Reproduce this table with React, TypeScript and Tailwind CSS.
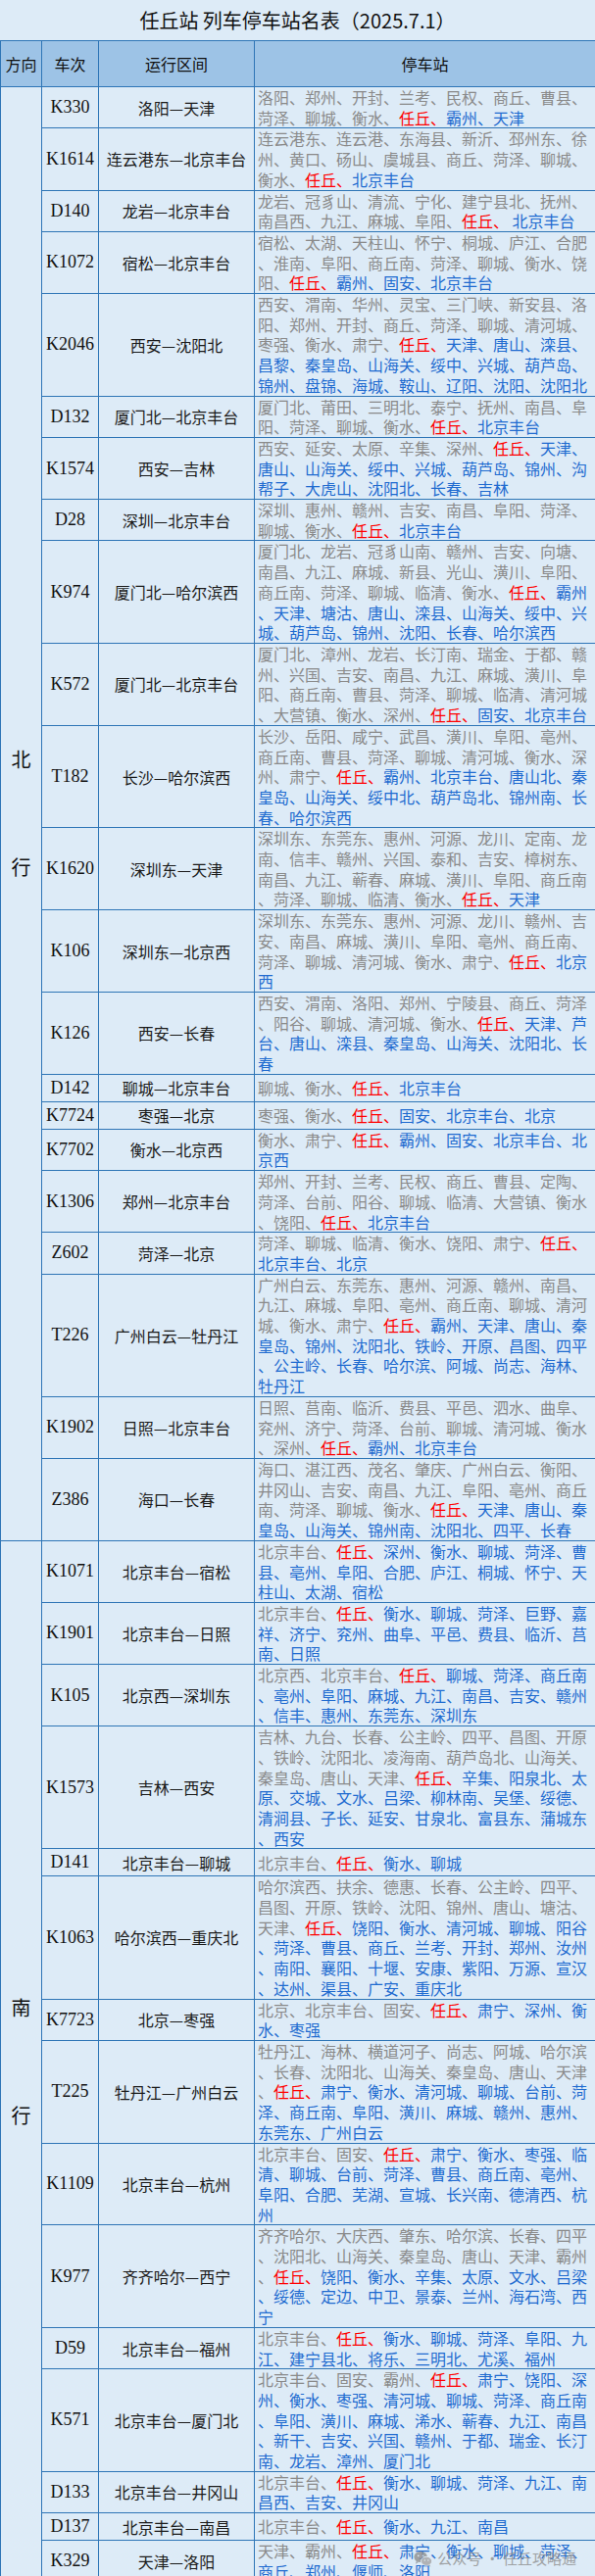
import React from "react";

type Row = { no: string; route: string; lines: string[] };

const north: Row[] = [
  { no: "K330", route: "洛阳—天津", lines: ["洛阳、郑州、开封、兰考、民权、商丘、曹县、", "菏泽、聊城、衡水、任丘、霸州、天津"] },
  { no: "K1614", route: "连云港东—北京丰台", lines: ["连云港东、连云港、东海县、新沂、邳州东、徐", "州、黄口、砀山、虞城县、商丘、菏泽、聊城、", "衡水、任丘、北京丰台"] },
  { no: "D140", route: "龙岩—北京丰台", lines: ["龙岩、冠豸山、清流、宁化、建宁县北、抚州、", "南昌西、九江、麻城、阜阳、任丘、 北京丰台"] },
  { no: "K1072", route: "宿松—北京丰台", lines: ["宿松、太湖、天柱山、怀宁、桐城、庐江、合肥", "、淮南、阜阳、商丘南、菏泽、聊城、衡水、饶", "阳、任丘、霸州、固安、北京丰台"] },
  { no: "K2046", route: "西安—沈阳北", lines: ["西安、渭南、华州、灵宝、三门峡、新安县、洛", "阳、郑州、开封、商丘、菏泽、聊城、清河城、", "枣强、衡水、肃宁、任丘、天津、唐山、滦县、", "昌黎、秦皇岛、山海关、绥中、兴城、葫芦岛、", "锦州、盘锦、海城、鞍山、辽阳、沈阳、沈阳北"] },
  { no: "D132", route: "厦门北—北京丰台", lines: ["厦门北、莆田、三明北、泰宁、抚州、南昌、阜", "阳、菏泽、聊城、衡水、任丘、北京丰台"] },
  { no: "K1574", route: "西安—吉林", lines: ["西安、延安、太原、辛集、深州、任丘、天津、", "唐山、山海关、绥中、兴城、葫芦岛、锦州、沟", "帮子、大虎山、沈阳北、长春、吉林"] },
  { no: "D28", route: "深圳—北京丰台", lines: ["深圳、惠州、赣州、吉安、南昌、阜阳、菏泽、", "聊城、衡水、任丘、北京丰台"] },
  { no: "K974", route: "厦门北—哈尔滨西", lines: ["厦门北、龙岩、冠豸山南、赣州、吉安、向塘、", "南昌、九江、麻城、新县、光山、潢川、阜阳、", "商丘南、菏泽、聊城、临清、衡水、任丘、霸州", "、天津、塘沽、唐山、滦县、山海关、绥中、兴", "城、葫芦岛、锦州、沈阳、长春、哈尔滨西"] },
  { no: "K572", route: "厦门北—北京丰台", lines: ["厦门北、漳州、龙岩、长汀南、瑞金、于都、赣", "州、兴国、吉安、南昌、九江、麻城、潢川、阜", "阳、商丘南、曹县、菏泽、聊城、临清、清河城", "、大营镇、衡水、深州、任丘、固安、北京丰台"] },
  { no: "T182", route: "长沙—哈尔滨西", lines: ["长沙、岳阳、咸宁、武昌、潢川、阜阳、亳州、", "商丘南、曹县、菏泽、聊城、清河城、衡水、深", "州、肃宁、任丘、霸州、北京丰台、唐山北、秦", "皇岛、山海关、绥中北、葫芦岛北、锦州南、长", "春、哈尔滨西"] },
  { no: "K1620", route: "深圳东—天津", lines: ["深圳东、东莞东、惠州、河源、龙川、定南、龙", "南、信丰、赣州、兴国、泰和、吉安、樟树东、", "南昌、九江、蕲春、麻城、潢川、阜阳、商丘南", "、菏泽、聊城、临清、衡水、任丘、天津"] },
  { no: "K106", route: "深圳东—北京西", lines: ["深圳东、东莞东、惠州、河源、龙川、赣州、吉", "安、南昌、麻城、潢川、阜阳、亳州、商丘南、", "菏泽、聊城、清河城、衡水、肃宁、任丘、北京", "西"] },
  { no: "K126", route: "西安—长春", lines: ["西安、渭南、洛阳、郑州、宁陵县、商丘、菏泽", "、阳谷、聊城、清河城、衡水、任丘、天津、芦", "台、唐山、滦县、秦皇岛、山海关、沈阳北、长", "春"] },
  { no: "D142", route: "聊城—北京丰台", lines: ["聊城、衡水、任丘、北京丰台"] },
  { no: "K7724", route: "枣强—北京", lines: ["枣强、衡水、任丘、固安、北京丰台、北京"] },
  { no: "K7702", route: "衡水—北京西", lines: ["衡水、肃宁、任丘、霸州、固安、北京丰台、北", "京西"] },
  { no: "K1306", route: "郑州—北京丰台", lines: ["郑州、开封、兰考、民权、商丘、曹县、定陶、", "菏泽、台前、阳谷、聊城、临清、大营镇、衡水", "、饶阳、任丘、北京丰台"] },
  { no: "Z602", route: "菏泽—北京", lines: ["菏泽、聊城、临清、衡水、饶阳、肃宁、任丘、", "北京丰台、北京"] },
  { no: "T226", route: "广州白云—牡丹江", lines: ["广州白云、东莞东、惠州、河源、赣州、南昌、", "九江、麻城、阜阳、亳州、商丘南、聊城、清河", "城、衡水、肃宁、任丘、霸州、天津、唐山、秦", "皇岛、锦州、沈阳北、铁岭、开原、昌图、四平", "、公主岭、长春、哈尔滨、阿城、尚志、海林、", "牡丹江"] },
  { no: "K1902", route: "日照—北京丰台", lines: ["日照、莒南、临沂、费县、平邑、泗水、曲阜、", "兖州、济宁、菏泽、台前、聊城、清河城、衡水", "、深州、任丘、霸州、北京丰台"] },
  { no: "Z386", route: "海口—长春", lines: ["海口、湛江西、茂名、肇庆、广州白云、衡阳、", "井冈山、吉安、南昌、九江、阜阳、亳州、商丘", "南、菏泽、聊城、衡水、任丘、天津、唐山、秦", "皇岛、山海关、锦州南、沈阳北、四平、长春"] },
];

const south: Row[] = [
  { no: "K1071", route: "北京丰台—宿松", lines: ["北京丰台、任丘、深州、衡水、聊城、菏泽、曹", "县、亳州、阜阳、合肥、庐江、桐城、怀宁、天", "柱山、太湖、宿松"] },
  { no: "K1901", route: "北京丰台—日照", lines: ["北京丰台、任丘、衡水、聊城、菏泽、巨野、嘉", "祥、济宁、兖州、曲阜、平邑、费县、临沂、莒", "南、日照"] },
  { no: "K105", route: "北京西—深圳东", lines: ["北京西、北京丰台、任丘、聊城、菏泽、商丘南", "、亳州、阜阳、麻城、九江、南昌、吉安、赣州", "、信丰、惠州、东莞东、深圳东"] },
  { no: "K1573", route: "吉林—西安", lines: ["吉林、九台、长春、公主岭、四平、昌图、开原", "、铁岭、沈阳北、凌海南、葫芦岛北、山海关、", "秦皇岛、唐山、天津、任丘、辛集、阳泉北、太", "原、交城、文水、吕梁、柳林南、吴堡、绥德、", "清涧县、子长、延安、甘泉北、富县东、蒲城东", "、西安"] },
  { no: "D141", route: "北京丰台—聊城", lines: ["北京丰台、任丘、衡水、聊城"] },
  { no: "K1063", route: "哈尔滨西—重庆北", lines: ["哈尔滨西、扶余、德惠、长春、公主岭、四平、", "昌图、开原、铁岭、沈阳、锦州、唐山、塘沽、", "天津、任丘、饶阳、衡水、清河城、聊城、阳谷", "、菏泽、曹县、商丘、兰考、开封、郑州、汝州", "、南阳、襄阳、十堰、安康、紫阳、万源、宣汉", "、达州、渠县、广安、重庆北"] },
  { no: "K7723", route: "北京—枣强", lines: ["北京、北京丰台、固安、任丘、肃宁、深州、衡", "水、枣强"] },
  { no: "T225", route: "牡丹江—广州白云", lines: ["牡丹江、海林、横道河子、尚志、阿城、哈尔滨", "、长春、沈阳北、山海关、秦皇岛、唐山、天津", "、任丘、肃宁、衡水、清河城、聊城、台前、菏", "泽、商丘南、阜阳、潢川、麻城、赣州、惠州、", "东莞东、广州白云"] },
  { no: "K1109", route: "北京丰台—杭州", lines: ["北京丰台、固安、任丘、肃宁、衡水、枣强、临", "清、聊城、台前、菏泽、曹县、商丘南、亳州、", "阜阳、合肥、芜湖、宣城、长兴南、德清西、杭", "州"] },
  { no: "K977", route: "齐齐哈尔—西宁", lines: ["齐齐哈尔、大庆西、肇东、哈尔滨、长春、四平", "、沈阳北、山海关、秦皇岛、唐山、天津、霸州", "、任丘、饶阳、衡水、辛集、太原、文水、吕梁", "、绥德、定边、中卫、景泰、兰州、海石湾、西", "宁"] },
  { no: "D59", route: "北京丰台—福州", lines: ["北京丰台、任丘、衡水、聊城、菏泽、阜阳、九", "江、建宁县北、将乐、三明北、尤溪、福州"] },
  { no: "K571", route: "北京丰台—厦门北", lines: ["北京丰台、固安、霸州、任丘、肃宁、饶阳、深", "州、衡水、枣强、清河城、聊城、菏泽、商丘南", "、阜阳、潢川、麻城、浠水、蕲春、九江、南昌", "、新干、吉安、兴国、赣州、于都、瑞金、长汀", "南、龙岩、漳州、厦门北"] },
  { no: "D133", route: "北京丰台—井冈山", lines: ["北京丰台、任丘、衡水、聊城、菏泽、九江、南", "昌西、吉安、井冈山"] },
  { no: "D137", route: "北京丰台—南昌", lines: ["北京丰台、任丘、衡水、九江、南昌"] },
  { no: "K329", route: "天津—洛阳", lines: ["天津、霸州、任丘、肃宁、衡水、聊城、菏泽、", "商丘、郑州、偃师、洛阳"] },
];

const cjk = { fontFamily: '"Noto Sans CJK SC", "Noto Sans", sans-serif' };
const serif = { fontFamily: '"Liberation Serif", "Noto Serif", serif' };

// gray before 任丘, red for "任丘、", blue after
function Stops({ lines }: { lines: string[] }) {
  const full = lines.join("");
  const a = full.indexOf("任丘");
  const b = a + 3;
  let offset = 0;
  return (
    <>
      {lines.map((line, i) => {
        const o = offset;
        offset += line.length;
        const end = o + line.length;
        const g = line.slice(0, Math.max(0, Math.min(end, a) - o));
        const r = line.slice(Math.max(0, a - o), Math.max(0, Math.min(end, b) - o));
        const bl = line.slice(Math.max(0, b - o));
        return (
          <div key={i} className="whitespace-pre">
            {g && <span className="text-[#8a8a8a]">{g}</span>}
            {r && a - o < line.length && <span className="text-[#ff0000]">{r}</span>}
            {bl && <span className="text-[#1f6bd0]">{bl}</span>}
          </div>
        );
      })}
    </>
  );
}

function Section({ rows, dir }: { rows: Row[]; dir: [string, string] }) {
  return (
    <>
      {rows.map((row, i) => {
        const single = row.lines.length === 1;
        return (
          <tr key={row.no} className={single ? "h-[25px]" : ""}>
            {i === 0 && (
              <td rowSpan={rows.length} className="border border-[#2e75b6] align-middle p-0">
                <div className="flex flex-col items-center gap-[90px] text-[20px] leading-[20px] text-[#111]">
                  <span>{dir[0]}</span>
                  <span>{dir[1]}</span>
                </div>
              </td>
            )}
            <td className="border border-[#2e75b6] text-center align-middle p-0 text-[18px] text-[#111]" style={serif}>
              {row.no}
            </td>
            <td className="border border-[#2e75b6] text-center align-middle p-0 text-[16px] text-[#1a1a1a] whitespace-nowrap">
              {row.route}
            </td>
            <td className="border border-[#2e75b6] align-middle py-0 pl-[3px] pr-0 text-[16px] leading-[20.7px]">
              <Stops lines={row.lines} />
            </td>
          </tr>
        );
      })}
    </>
  );
}

function WeChatIcon() {
  return (
    <svg width="19" height="17" viewBox="0 0 24 21" fill="#8f8f8f">
      <ellipse cx="9" cy="8" rx="8.5" ry="7" />
      <path d="M3.5 13.5 L2.5 17 L6.5 14.5 Z" />
      <ellipse cx="16.5" cy="13.5" rx="7" ry="5.8" fill="#a5a5a5" stroke="#ddebf7" strokeWidth="1.2" />
      <path d="M20.5 18 L22 20.5 L18 19 Z" fill="#a5a5a5" />
      <circle cx="6" cy="6.5" r="1.1" fill="#ddebf7" />
      <circle cx="12" cy="6.5" r="1.1" fill="#ddebf7" />
      <circle cx="14.3" cy="12.5" r="0.9" fill="#ddebf7" />
      <circle cx="18.8" cy="12.5" r="0.9" fill="#ddebf7" />
    </svg>
  );
}

export default function App() {
  return (
    <div className="relative w-[607px] bg-[#ddebf7]" style={cjk}>
      <div className="h-[41px] flex items-center justify-center text-[20px] text-[#111]">
        任丘站 列车停车站名表（2025.7.1）
      </div>
      <table className="w-[607px] table-fixed border-collapse">
        <colgroup>
          <col className="w-[42px]" />
          <col className="w-[58px]" />
          <col className="w-[159px]" />
          <col className="w-[348px]" />
        </colgroup>
        <thead>
          <tr className="h-[47px] bg-[#9dc3e6] text-[16px] text-[#111]">
            <th className="border border-[#2e75b6] font-normal p-0">方向</th>
            <th className="border border-[#2e75b6] font-normal p-0">车次</th>
            <th className="border border-[#2e75b6] font-normal p-0">运行区间</th>
            <th className="border border-[#2e75b6] font-normal p-0">停车站</th>
          </tr>
        </thead>
        <tbody>
          <Section rows={north} dir={["北", "行"]} />
          <Section rows={south} dir={["南", "行"]} />
        </tbody>
      </table>
      <div className="absolute right-[19px] bottom-[13px] flex items-center gap-[5px] text-[15px] text-[#8f8f8f] opacity-80">
        <WeChatIcon />
        <span>公众号 · 任丘攻略通</span>
      </div>
    </div>
  );
}
